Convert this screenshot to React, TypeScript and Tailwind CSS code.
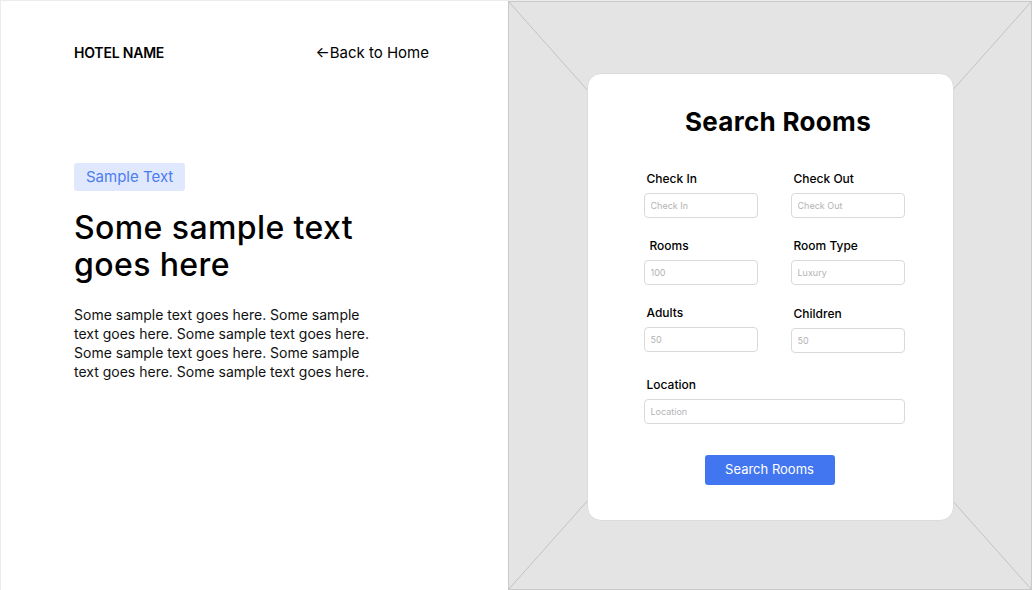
const font = { fontFamily: 'Inter, "Open Sans", sans-serif' };

function Field({ label, placeholder, width = 'w-[114px]', labelPad = 'pl-[3px]' }: { label: string; placeholder: string; width?: string; labelPad?: string }) {
  return (
    <div className="flex flex-col">
      <label className={`text-[12px] leading-[16px] font-medium text-black ${labelPad}`}>{label}</label>
      <input
        placeholder={placeholder}
        className={`mt-[6px] h-[25px] ${width} rounded-[4px] border border-[#d9d9d9] bg-white px-[6px] text-[9px] text-black placeholder:text-[#b3b3b3] outline-none`}
      />
    </div>
  );
}

export default function App() {
  return (
    <div style={font} className="flex h-[590px] w-[1032px] overflow-hidden border-l border-t border-[#ececec] bg-white text-black">
      {/* left column */}
      <div className="flex w-[507px] flex-col pl-[73px] pr-[79px] pt-[42px]">
        <header className="flex items-center justify-between leading-[20px]">
          <span className="text-[14px] font-semibold tracking-[-0.2px]">HOTEL NAME</span>
          <a href="#" className="text-[15px]">←Back to Home</a>
        </header>

        <span className="mt-[100px] inline-flex h-[28px] w-fit items-center rounded-[3px] bg-[#dfe8fd] px-[12px] text-[15px] text-[#4c7cf0]">
          Sample Text
        </span>

        <h1 className="mt-[18px] text-[32px] font-medium leading-[37px] tracking-[0.4px]">
          Some sample text
          <br />
          goes here
        </h1>

        <p className="mt-[22px] text-[14px] leading-[19px] text-[#111]">
          Some sample text goes here. Some sample
          <br />
          text goes here. Some sample text goes here.
          <br />
          Some sample text goes here. Some sample
          <br />
          text goes here. Some sample text goes here.
        </p>
      </div>

      {/* image placeholder with search card */}
      <div className="relative flex flex-1 items-start justify-center border border-[#c9c9c9] bg-[#e4e4e4] pt-[71px]">
        <svg className="absolute inset-0 h-full w-full" preserveAspectRatio="none" viewBox="0 0 100 100">
          <line x1="0" y1="0" x2="100" y2="100" stroke="#c2c2c2" strokeWidth="1" vectorEffect="non-scaling-stroke" />
          <line x1="100" y1="0" x2="0" y2="100" stroke="#c2c2c2" strokeWidth="1" vectorEffect="non-scaling-stroke" />
        </svg>

        <div className="relative h-[448px] w-[367px] rounded-[14px] border border-[#dcdcdc] bg-white pl-[56px] pr-[48px] pt-[32px]">
          <h2 className="pl-[8px] text-center text-[26px] font-bold leading-[32px] tracking-[0.3px]">Search Rooms</h2>

          <div className="mt-[33px] grid grid-cols-[114px_114px] gap-x-[33px] gap-y-[20px]">
            <Field label="Check In" placeholder="Check In" />
            <Field label="Check Out" placeholder="Check Out" />
            <Field label="Rooms" placeholder="100" labelPad="pl-[6px]" />
            <Field label="Room Type" placeholder="Luxury" />
            <Field label="Adults" placeholder="50" />
            <div className="mt-[1px]">
              <Field label="Children" placeholder="50" />
            </div>
          </div>

          <div className="mt-[24px]">
            <Field label="Location" placeholder="Location" width="w-[261px]" />
          </div>

          <button className="ml-[61px] mt-[31px] h-[30px] w-[130px] rounded-[3px] bg-[#4276f1] text-[13px] text-white">
            Search Rooms
          </button>
        </div>
      </div>
    </div>
  );
}
